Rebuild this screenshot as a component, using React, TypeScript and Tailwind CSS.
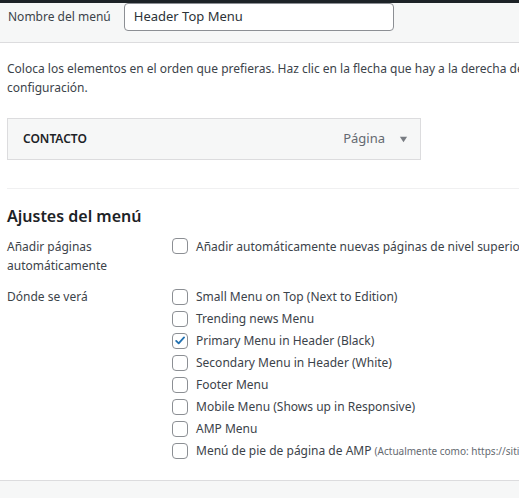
import React from "react";

const locations = [
  { label: "Small Menu on Top (Next to Edition)", checked: false },
  { label: "Trending news Menu", checked: false },
  { label: "Primary Menu in Header (Black)", checked: true },
  { label: "Secondary Menu in Header (White)", checked: false },
  { label: "Footer Menu", checked: false },
  { label: "Mobile Menu (Shows up in Responsive)", checked: false },
  { label: "AMP Menu", checked: false },
];

const Checkbox = ({ checked }: { checked?: boolean }) => (
  <span className="flex h-4 w-4 shrink-0 items-center justify-center rounded-[4px] border border-[#8c8f94] bg-white">
    {checked && (
      <svg viewBox="0 0 20 20" className="h-[15px] w-[15px]">
        <path
          d="M4.5 10.5l3.6 3.6L15.8 5.6"
          fill="none"
          stroke="#2271b1"
          strokeWidth="2.6"
          strokeLinecap="round"
          strokeLinejoin="round"
        />
      </svg>
    )}
  </span>
);

const App = () => {
  return (
    <div
      className="min-h-[498px] w-full overflow-hidden bg-white text-[12px] text-[#3c434a]"
      style={{ fontFamily: '"Segoe UI", "Noto Sans", sans-serif' }}
    >
      {/* Top bar */}
      <div className="h-[3px] bg-[#1d2327]" />

      {/* Menu name header */}
      <div className="flex h-[40px] items-start gap-[13px] border-b border-[#dcdcde] bg-[#f6f7f7] pl-[8px]">
        <label className="mt-[4px] whitespace-nowrap leading-[20px]">Nombre del menú</label>
        <div className="flex h-[28px] w-[270px] items-center rounded-[4px] border border-[#8c8f94] bg-white px-[9px] text-[13px] text-[#2c3338]">
          Header Top Menu
        </div>
      </div>

      {/* Instructions */}
      <div className="px-[7px] pt-[16px] leading-[19px]">
        <p className="whitespace-nowrap">
          Coloca los elementos en el orden que prefieras. Haz clic en la flecha que hay a la derecha del elemento para mostrar más opciones de
        </p>
        <p className="whitespace-nowrap">configuración.</p>
      </div>

      {/* Menu item */}
      <div className="ml-[7px] mt-[21px] flex h-[42px] w-[414px] items-center border border-[#dcdcde] bg-[#f6f7f7] pl-[15px] pr-[12px]">
        <span className="font-semibold text-[#1d2327]">CONTACTO</span>
        <span className="ml-auto text-[13px] text-[#646970]">Página</span>
        <svg viewBox="0 0 10 10" className="ml-[14px] h-[9px] w-[9px]">
          <path d="M1 2h8L5 8z" fill="#787c82" />
        </svg>
      </div>

      {/* Separator */}
      <div className="ml-[7px] mt-[28px] border-t border-[#f0f0f1]" />

      {/* Settings */}
      <div className="px-[7px]">
        <h3 className="mt-[16px] text-[16px] font-semibold leading-[22px] text-[#1d2327]">
          Ajustes del menú
        </h3>

        <div className="mt-[10px] flex">
          <div className="w-[165px] shrink-0 leading-[19px]">
            Añadir páginas
            <br />
            automáticamente
          </div>
          <div className="flex items-start gap-[8px] whitespace-nowrap">
            <span className="mt-[1px]">
              <Checkbox />
            </span>
            <span className="leading-[19px]">
              Añadir automáticamente nuevas páginas de nivel superior a este menú
            </span>
          </div>
        </div>

        <div className="mt-[12px] flex">
          <div className="w-[165px] shrink-0 leading-[19px]">Dónde se verá</div>
          <div className="flex flex-col gap-[3px] whitespace-nowrap">
            {locations.map((loc) => (
              <div key={loc.label} className="flex h-[19px] items-center gap-[8px]">
                <Checkbox checked={loc.checked} />
                <span>{loc.label}</span>
              </div>
            ))}
            <div className="flex h-[19px] items-center gap-[8px]">
              <Checkbox />
              <span>
                Menú de pie de página de AMP{" "}
                <span className="text-[10px] text-[#646970]">
                  (Actualmente como: https://sitio.com/menu)
                </span>
              </span>
            </div>
          </div>
        </div>
      </div>

      {/* Footer */}
      <div className="mt-[20px] h-[20px] border-t border-[#dcdcde] bg-[#f6f7f7]" />
    </div>
  );
};

export default App;
